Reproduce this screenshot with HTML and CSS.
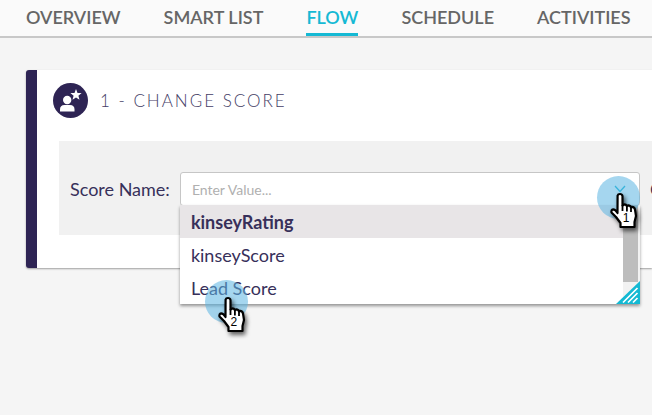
FILE: index.html
```html
<!DOCTYPE html>
<html lang="en">
<head>
<meta charset="utf-8">
<title>Flow</title>
<link rel="stylesheet" href="styles.css">
</head>
<body>
<svg class="defs" aria-hidden="true">
  <symbol id="hand" viewBox="0 0 32 40">
    <path d="M8.600 3.500Q9 2 11 2T13.500 4V13.500L15 12.500Q17 12.200 17.800 14.200L19 13.300Q21.300 13.200 22 15.400L23 14.800Q25.500 15 26 17.500L27 24L25.500 30V35H11.500V31L7 25L2.500 20.500Q2 18.500 3.500 17.500Q6 17 8.500 21Z" fill="#fff" stroke="#000" stroke-width="2.200" stroke-linejoin="round"/>
    <path d="M13.500 13V19M17.900 14V19.500M22 15.500V20" fill="none" stroke="#000" stroke-width="1.800"/>
  </symbol>
</svg>
<nav class="tabs">
  <a class="tab" href="#overview">OVERVIEW</a>
  <a class="tab" href="#smart-list">SMART LIST</a>
  <a class="tab tab-active" href="#flow" aria-current="page">FLOW</a>
  <a class="tab" href="#schedule">SCHEDULE</a>
  <a class="tab" href="#activities">ACTIVITIES</a>
</nav>
<main class="page">
  <section class="card">
    <header class="card-head">
      <svg class="badge" viewBox="0 0 35 35" aria-hidden="true">
        <circle cx="17.500" cy="17.500" r="17.500" fill="#2e2454"/>
        <circle cx="14.200" cy="17" r="4.200" fill="#fff"/>
        <path d="M7 28.500V26.500Q7 22 11.500 22H17Q21.500 22 21.500 26.500V28.500Z" fill="#fff"/>
        <path d="M23 6L24.500 9.900L28.600 10.100L25.400 12.700L26.500 16.700L23 14.400L19.500 16.700L20.600 12.700L17.400 10.100L21.500 9.900Z" fill="#fff"/>
      </svg>
      <h1 class="title">1 - CHANGE SCORE</h1>
    </header>
    <div class="panel">
      <label class="label" for="score">Score Name:</label>
      <div class="combo">
        <div class="field">
          <input class="input" id="score" type="text" placeholder="Enter Value...">
          <button class="toggle" type="button" aria-label="Show options">
            <svg viewBox="0 0 12 8" width="12" height="8"><path d="M1 1L6 6.500L11 1" fill="none" stroke="#15b4d2" stroke-width="1.300"/></svg>
          </button>
        </div>
        <div class="menu">
          <ul class="options">
            <li class="option option-active">kinseyRating</li>
            <li class="option">kinseyScore</li>
            <li class="option">Lead Score</li>
          </ul>
          <div class="scroll"><div class="thumb"></div></div>
          <svg class="grip" viewBox="0 0 24 23" aria-hidden="true">
            <path d="M24 0V23H0Z" fill="#13b9d3"/>
            <path d="M7 21.500L21.500 7M12 21.500L21.500 12M17 21.500L21.500 17" stroke="#fff" stroke-width="1.700"/>
          </svg>
        </div>
        <div class="pointer pointer-one"><svg class="hand"><use href="#hand"/></svg><span class="step">1</span></div>
        <div class="pointer pointer-two"><svg class="hand"><use href="#hand"/></svg><span class="step">2</span></div>
      </div>
      <span class="label next">C</span>
    </div>
  </section>
</main>
</body>
</html>
```
FILE: styles.css
```css
* { box-sizing: border-box; }
body {
  margin: 0;
  min-height: 100vh;
  overflow: hidden;
  background: #f5f5f5;
  color: #2e2454;
  font-family: Lato, "Liberation Sans", sans-serif;
}
.defs { position: absolute; width: 0; height: 0; }
.tabs {
  display: flex;
  gap: 43px;
  padding: 0 26px;
  background: #fafafa;
  border-bottom: 2px solid #c8c8c8;
}
.tab {
  padding: 6px 0 5px;
  border-bottom: 3px solid transparent;
  color: #666;
  font-size: 18px;
  font-weight: 600;
  line-height: 22px;
  white-space: nowrap;
  text-decoration: none;
}
.tab-active { color: #15b9d4; border-color: #15b9d4; }
.page { padding: 32px 0 0 26px; }
.card {
  padding: 13px 0 33px 16px;
  background: #fff;
  border-left: 11px solid #2e2454;
  border-radius: 3px 0 0 3px;
  box-shadow: 0 1px 2px rgba(0, 0, 0, .35);
}
.card-head { display: flex; align-items: center; gap: 12px; }
.badge { width: 35px; height: 35px; }
.title {
  margin: 0;
  color: #453d66;
  font-size: 17px;
  font-weight: 300;
  letter-spacing: 2px;
  line-height: 24px;
}
.panel {
  display: flex;
  align-items: center;
  gap: 10px;
  margin: 23px 0 0 6px;
  padding: 31px 0 29px 11px;
  background: #f1f1f1;
}
.label { color: #37305a; font-size: 18px; line-height: 24px; white-space: nowrap; }
.next { width: 2px; overflow: hidden; }
.combo { position: relative; flex: 1; }
.field {
  display: flex;
  height: 34px;
  background: #fff;
  border: 1px solid #c6c6c6;
  border-radius: 3px;
}
.input {
  flex: 1;
  min-width: 0;
  padding: 0 11px;
  border: 0;
  outline: 0;
  background: transparent;
  color: inherit;
  font: 14px Lato, "Liberation Sans", sans-serif;
}
.input::placeholder { color: #b0b0b0; opacity: 1; }
.toggle {
  display: flex;
  align-items: center;
  justify-content: center;
  width: 38px;
  padding: 0;
  border: 0;
  background: transparent;
}
.menu {
  position: absolute;
  top: 33px;
  left: 0;
  right: 0;
  display: flex;
  background: #fff;
  box-shadow: 0 2px 3px rgba(0, 0, 0, .4);
}
.options { flex: 1; margin: 0; padding: 0; list-style: none; }
.option {
  height: 33px;
  padding: 1px 11px 0;
  color: #37305a;
  font-size: 18px;
  line-height: 32px;
}
.option-active { background: #e8e5e7; font-weight: 700; }
.scroll { width: 17px; background: #f2f2f2; }
.thumb { width: 15px; height: 77px; background: #bdbdbd; }
.grip { position: absolute; right: 0; bottom: 0; width: 24px; height: 23px; }
.pointer {
  position: absolute;
  width: 43px;
  height: 43px;
  border-radius: 50%;
  background: rgba(91, 180, 225, .55);
}
.pointer-one { top: 4px; right: 0; }
.pointer-two { top: 108px; left: 25px; }
.hand {
  position: absolute;
  top: 16px;
  left: 12px;
  width: 32px;
  height: 40px;
  filter: drop-shadow(2px 3px 2px rgba(0, 0, 0, .6));
}
.step {
  position: absolute;
  top: 35px;
  left: 25px;
  width: 8px;
  color: #000;
  font: 12px/14px "Liberation Sans", sans-serif;
  text-align: center;
}
```
